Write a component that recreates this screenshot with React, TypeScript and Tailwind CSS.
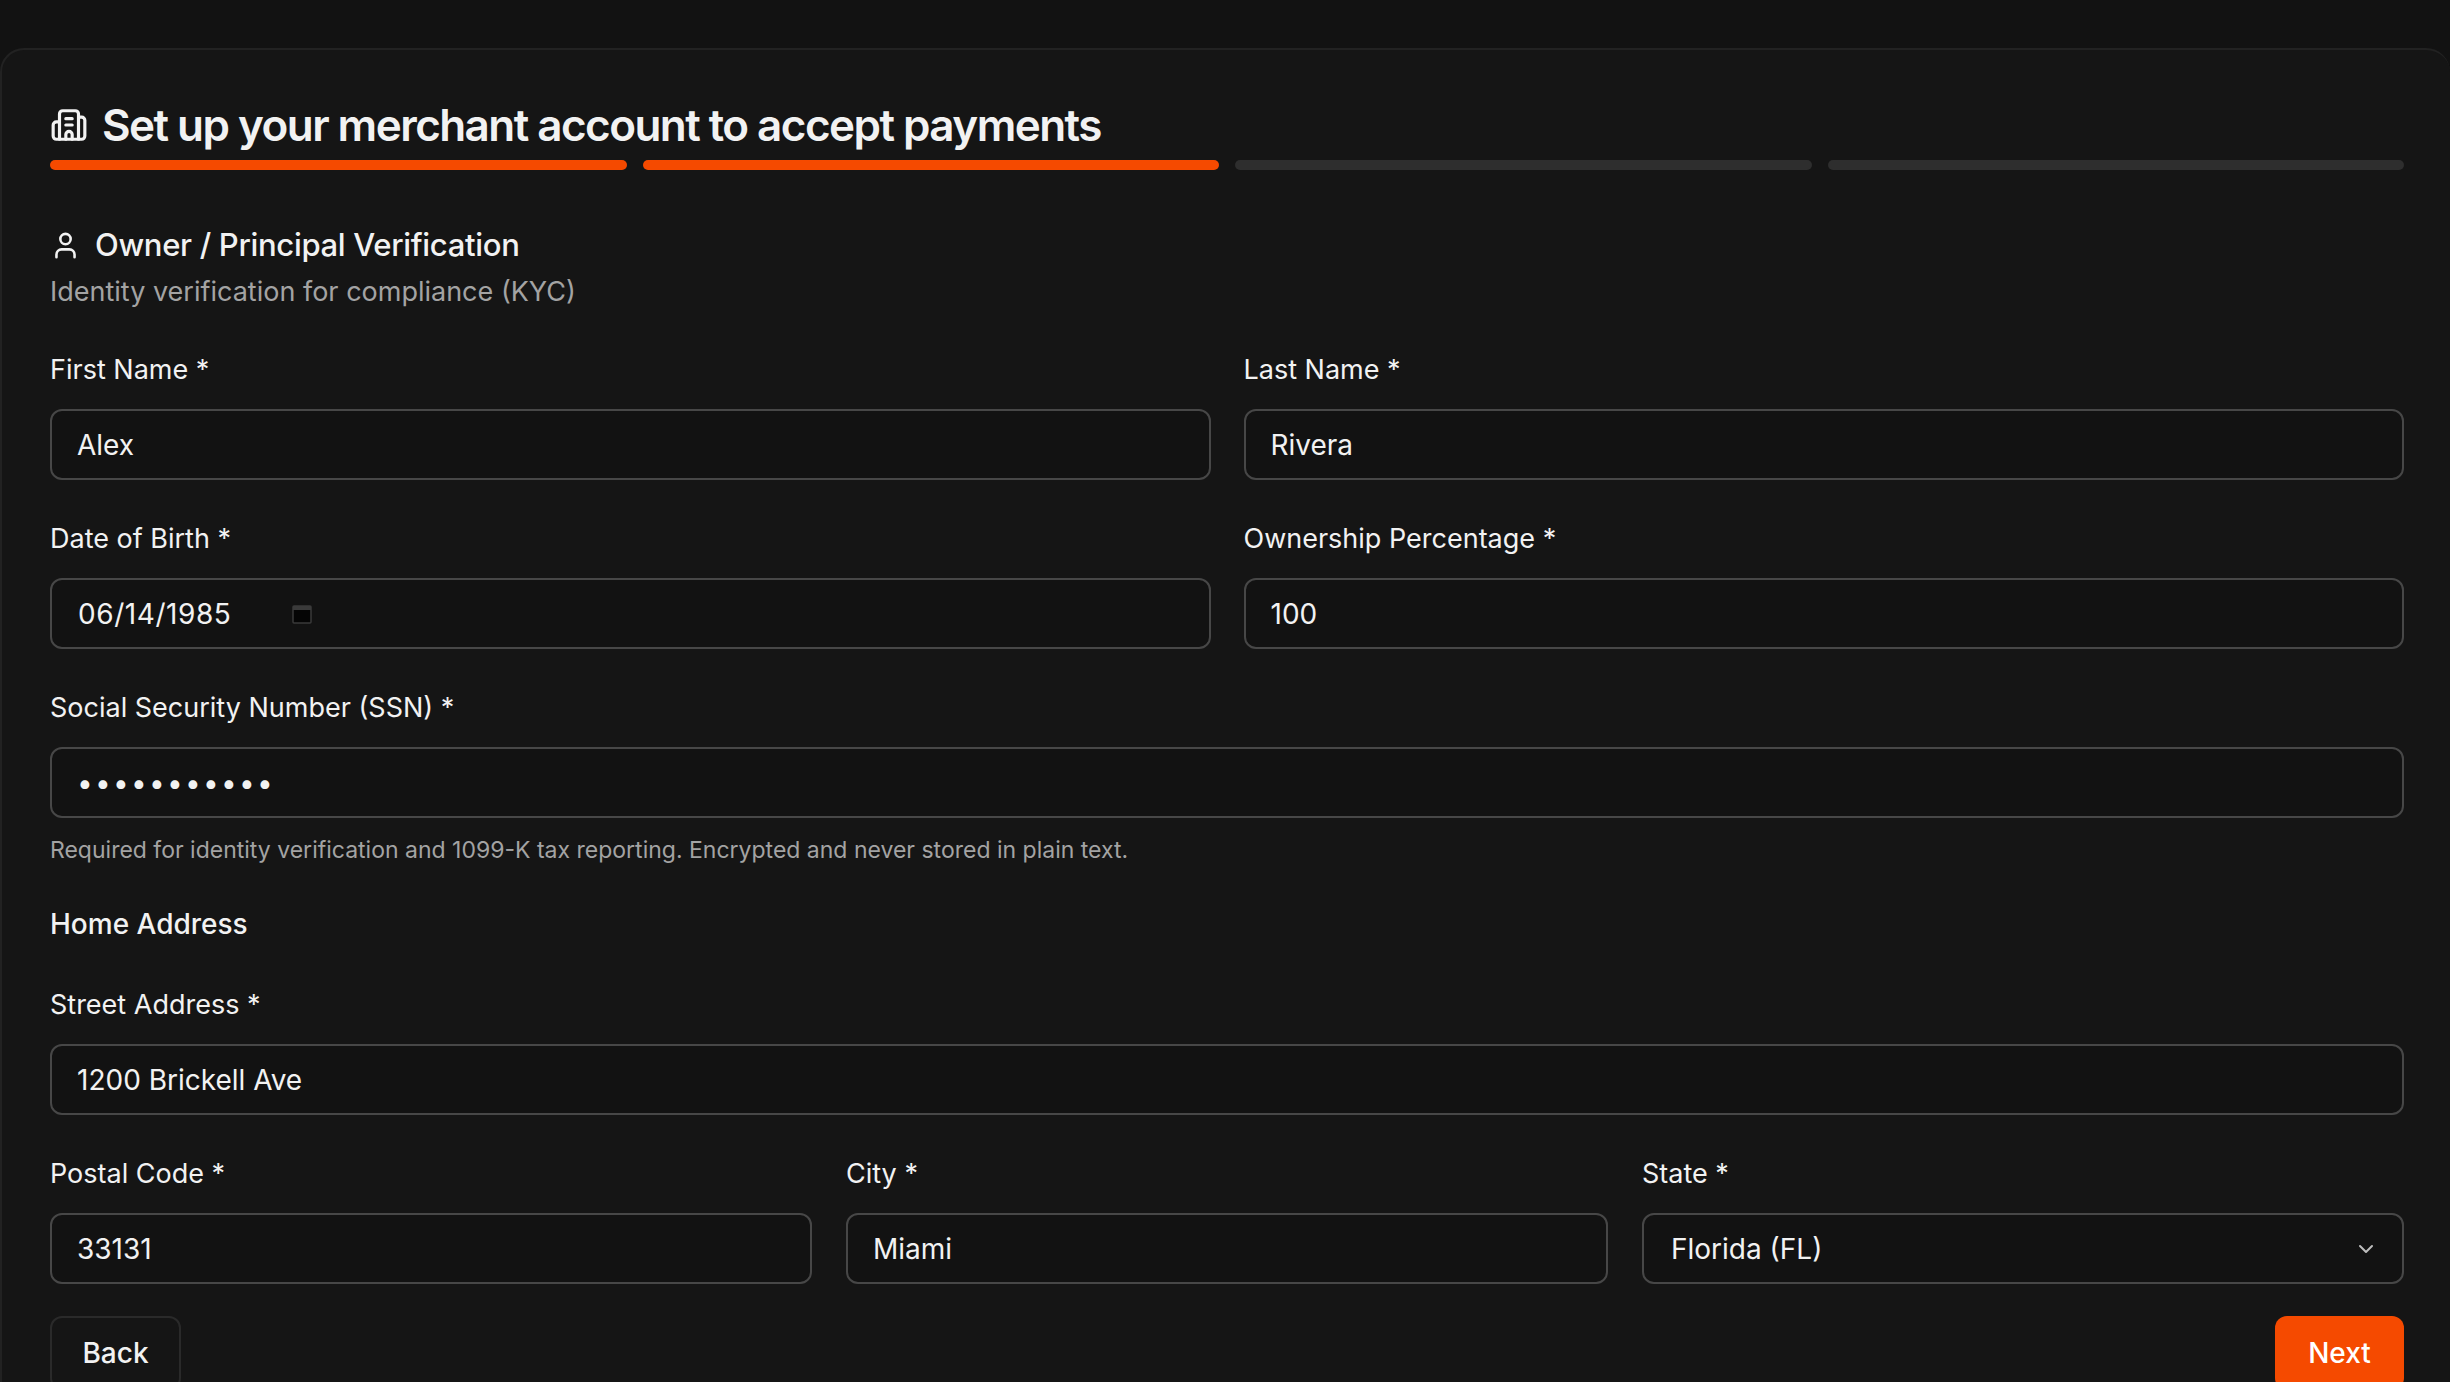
import React from 'react';
import { Building2, User, ChevronDown } from 'lucide-react';

const Label = ({ children }: { children: React.ReactNode }) => (
  <div className="h-[40px] flex items-center text-[27px] text-[#f2f2f2] mb-[19px]">{children}</div>
);

const Input = ({ value, className = '' }: { value: string; className?: string }) => (
  <div className={`h-[71px] rounded-[12px] border-2 border-[#474747] bg-[#121212] px-[25px] flex items-center text-[28px] text-[#f2f2f2] ${className}`}>
    {value}
  </div>
);

const Field = ({ label, children }: { label: string; children: React.ReactNode }) => (
  <div className="flex flex-col">
    <Label>{label}</Label>
    {children}
  </div>
);

export default function App() {
  return (
    <div className="min-h-screen bg-[#121212] pt-[48px]" style={{ fontFamily: 'Inter, "Noto Sans", sans-serif' }}>
      <div className="bg-[#151515] border-2 border-[#222] border-b-0 border-r-0 rounded-tl-[24px] rounded-tr-[24px] pl-[48px] pr-[46px] pt-[47px] h-[1334px] overflow-hidden">
        <div className="flex items-center gap-[14px] h-[56px]">
          <Building2 className="w-[38px] h-[38px] text-[#f2f2f2]" strokeWidth={2} />
          <h1 className="text-[44px] font-semibold tracking-[-0.035em] text-[#f2f2f2]">Set up your merchant account to accept payments</h1>
        </div>
        <div className="mt-[7px] grid grid-cols-4 gap-[16px]">
          <div className="h-[10px] rounded-full bg-[#f54a00]" />
          <div className="h-[10px] rounded-full bg-[#f54a00]" />
          <div className="h-[10px] rounded-full bg-[#2e2e2e]" />
          <div className="h-[10px] rounded-full bg-[#2e2e2e]" />
        </div>

        <div className="mt-[55px] h-[40px] flex items-center gap-[14px]">
          <User className="w-[31px] h-[31px] text-[#f2f2f2]" strokeWidth={2} />
          <span className="text-[31px] font-medium text-[#f2f2f2] tracking-[-0.01em]">Owner / Principal Verification</span>
        </div>
        <div className="mt-[9px] h-[36px] flex items-center text-[27px] text-[#a3a3a3]">Identity verification for compliance (KYC)</div>

        <div className="mt-[40px] grid grid-cols-2 gap-x-[33px] gap-y-[39px]">
          <Field label="First Name *"><Input value="Alex" /></Field>
          <Field label="Last Name *"><Input value="Rivera" /></Field>
          <Field label="Date of Birth *">
            <div className="h-[71px] rounded-[12px] border-2 border-[#474747] bg-[#121212] px-[26px] flex items-center text-[28px] text-[#f2f2f2]">
              <span className="tracking-[0.02em]">06/14/1985</span>
              <svg className="ml-[60px]" width="22" height="22" viewBox="0 0 22 22">
                <rect x="2" y="3" width="18" height="17" rx="1" fill="#050505" stroke="#3a3a3a" strokeWidth="1.5" />
                <rect x="2" y="3" width="18" height="4" fill="#3a3a3a" />
              </svg>
            </div>
          </Field>
          <Field label="Ownership Percentage *"><Input value="100" /></Field>
          <div className="col-span-2 flex flex-col">
            <Label>Social Security Number (SSN) *</Label>
            <Input value="•••••••••••" className="tracking-[0.08em]" />
            <div className="mt-[16px] h-[32px] flex items-center text-[23px] text-[#a3a3a3]">
              Required for identity verification and 1099-K tax reporting. Encrypted and never stored in plain text.
            </div>
          </div>
        </div>

        <div className="mt-[38px] h-[40px] flex items-center text-[28px] text-[#f2f2f2] font-medium">Home Address</div>
        <div className="mt-[41px]">
          <Field label="Street Address *"><Input value="1200 Brickell Ave" /></Field>
        </div>
        <div className="mt-[39px] grid grid-cols-3 gap-x-[34px]">
          <Field label="Postal Code *"><Input value="33131" /></Field>
          <Field label="City *"><Input value="Miami" /></Field>
          <Field label="State *">
            <div className="h-[71px] rounded-[12px] border-2 border-[#474747] bg-[#121212] pl-[27px] pr-[24px] flex items-center justify-between text-[28px] text-[#f2f2f2]">
              <span>Florida (FL)</span>
              <ChevronDown className="w-[24px] h-[24px] text-[#bdbdbd]" />
            </div>
          </Field>
        </div>

        <div className="mt-[32px] flex justify-between">
          <button className="h-[74px] w-[131px] rounded-[12px] border-2 border-[#2a2a2a] bg-[#151515] text-[28px] text-[#f2f2f2] font-medium">Back</button>
          <button className="h-[74px] w-[129px] rounded-[12px] bg-[#f54a00] text-[28px] text-white font-medium">Next</button>
        </div>
      </div>
    </div>
  );
}
